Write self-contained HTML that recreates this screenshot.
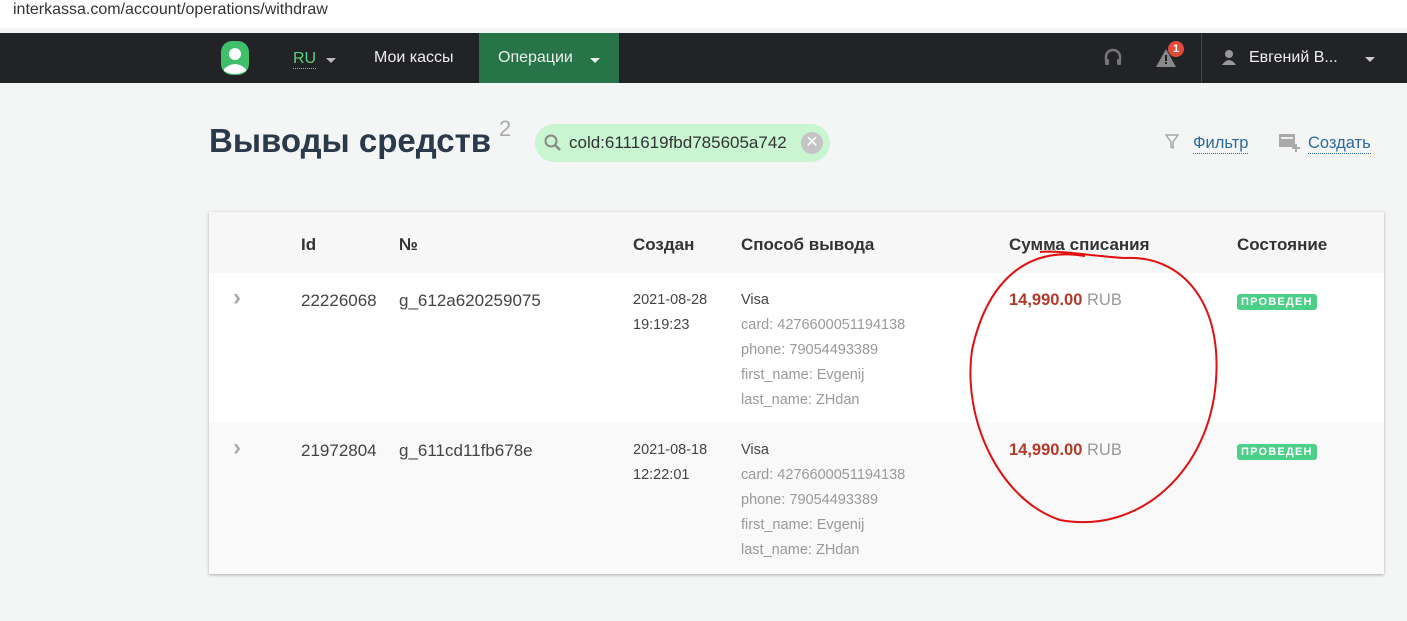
<!DOCTYPE html>
<html><head><meta charset="utf-8"><style>
*{margin:0;padding:0;box-sizing:border-box}
body{width:1407px;height:621px;overflow:hidden;background:#f4f5f5;font-family:"Liberation Sans","DejaVu Sans",sans-serif;position:relative}
.abs{position:absolute;white-space:nowrap}
.addr{position:absolute;left:0;top:0;width:1407px;height:28px;background:#fff;font-size:16px;color:#333;padding:1px 0 0 13px}
.nav{position:absolute;left:0;top:33px;width:1407px;height:50px;background:#222327}
.nav .t{color:#eee;font-size:16px;top:16px}
.car{position:absolute;width:0;height:0;border-left:5px solid transparent;border-right:5px solid transparent;border-top:5px solid #bbb}
.card{position:absolute;left:209px;top:212px;width:1175px;height:362px;background:#f7f7f7;box-shadow:0 1px 3px rgba(0,0,0,.3)}
.row{position:absolute;left:0;width:1175px;height:150px}
.th{font-weight:bold;font-size:17px;color:#333;top:23px}
.td{font-size:17px;color:#444}
.sm{font-size:14.5px;color:#444;line-height:25px}
.gr{color:#999}
.badge{background:#4ccf87;color:#fff;font-size:11px;font-weight:bold;letter-spacing:1.2px;padding:2px 4px;border-radius:3px}
.amt{font-size:16.5px;font-weight:bold;color:#b23a2b}
.amt span{font-weight:normal;color:#999}
.chev{color:#aaa;font-size:24px;font-weight:bold;line-height:24px}
</style></head><body>
<div class="addr">interkassa.com/account/operations/withdraw</div>
<div class="nav">
  <svg class="abs" style="left:220px;top:8px" width="30" height="36" viewBox="0 0 30 36"><rect x="1" y="0" width="28" height="34" rx="11" fill="#3fbf6a"/><circle cx="15" cy="13" r="6" fill="#fff"/><path d="M4 28 Q15 18 26 28 L26 30 Q15 36 4 30Z" fill="#fff"/></svg>
  <div class="abs t" style="left:293px;color:#5fcf82;border-bottom:1px dotted #5fcf82;line-height:18px;top:17px">RU</div>
  <div class="car" style="left:326px;top:25px"></div>
  <div class="abs t" style="left:374px;top:16px">Мои кассы</div>
  <div class="abs" style="left:479px;top:0;width:140px;height:50px;background:#267447"></div>
  <div class="abs t" style="left:498px">Операции</div>
  <div class="car" style="left:590px;top:25px;border-top-color:#eee"></div>
  <svg class="abs" style="left:1102px;top:15px" width="22" height="22" viewBox="0 0 22 22"><path d="M4 12 V9 a7 7 0 0 1 14 0 V12" stroke="#777" stroke-width="2.5" fill="none"/><rect x="3" y="11" width="4" height="6" rx="1" fill="#777"/><rect x="15" y="11" width="4" height="6" rx="1" fill="#777"/></svg>
  <svg class="abs" style="left:1156px;top:15px" width="22" height="20" viewBox="0 0 22 20"><path d="M10 1 L20 19 H0Z" fill="#888"/><rect x="9" y="7" width="2" height="6" fill="#222"/><rect x="9" y="14" width="2" height="2" fill="#222"/></svg>
  <div class="abs" style="left:1168px;top:8px;width:16px;height:16px;border-radius:50%;background:#e24a3b;color:#fff;font-size:11px;font-weight:bold;text-align:center;line-height:16px">1</div>
  <div class="abs" style="left:1201px;top:0;width:1px;height:50px;background:#444"></div>
  <svg class="abs" style="left:1221px;top:16px" width="16" height="16" viewBox="0 0 16 16"><circle cx="8" cy="5" r="4" fill="#999"/><path d="M1 16 Q8 6 15 16Z" fill="#999"/></svg>
  <div class="abs t" style="left:1249px;top:16px">Евгений В...</div>
  <div class="car" style="left:1365px;top:24px;border-top-color:#ccc"></div>
</div>
<div class="abs" style="left:209px;top:122px;font-size:33px;font-weight:bold;color:#2b3a4a">Выводы средств</div>
<div class="abs" style="left:499px;top:116px;font-size:22px;color:#aaa">2</div>
<div class="abs" style="left:535px;top:124px;width:295px;height:38px;border-radius:19px;background:#c9f5d1"></div>
<svg class="abs" style="left:543px;top:133px" width="20" height="20" viewBox="0 0 20 20"><circle cx="8" cy="8" r="5.5" stroke="#888" stroke-width="2" fill="none"/><path d="M12 12 L17 17" stroke="#888" stroke-width="2.5"/></svg>
<div class="abs" style="left:569px;top:133px;font-size:17px;color:#333">cold:6111619fbd785605a742</div>
<div class="abs" style="left:801px;top:132px;width:22px;height:22px;border-radius:50%;background:#c4c4c4;color:#fff;font-size:16px;font-weight:bold;text-align:center;line-height:22px">✕</div>
<svg class="abs" style="left:1165px;top:134px" width="14" height="16" viewBox="0 0 14 16"><path d="M1 1 H13 L8 8 V14 L6 13 V8Z" stroke="#aaa" fill="none" stroke-width="1.5"/></svg>
<div class="abs" style="left:1193px;top:134px;font-size:16.5px;color:#2b6aa0;border-bottom:1px dotted #2b6aa0;line-height:19px">Фильтр</div>
<svg class="abs" style="left:1279px;top:134px" width="22" height="18" viewBox="0 0 22 18"><rect x="0" y="0" width="16" height="13" fill="#aaa"/><rect x="2" y="3" width="12" height="2" fill="#eee"/><path d="M17 10 V18 M13 14 H21" stroke="#aaa" stroke-width="2"/></svg>
<div class="abs" style="left:1308px;top:134px;font-size:16.5px;color:#2b6aa0;border-bottom:1px dotted #2b6aa0;line-height:19px">Создать</div>

<div class="card">
  <div class="abs th" style="left:92px">Id</div>
  <div class="abs th" style="left:190px">№</div>
  <div class="abs th" style="left:424px">Создан</div>
  <div class="abs th" style="left:532px">Способ вывода</div>
  <div class="abs th" style="left:800px">Сумма списания</div>
  <div class="abs th" style="left:1028px">Состояние</div>
  <div class="row" style="top:61px;background:#fff">
    <div class="abs chev" style="left:24px;top:13px">›</div>
    <div class="abs td" style="left:92px;top:18px">22226068</div>
    <div class="abs td" style="left:190px;top:18px">g_612a620259075</div>
    <div class="abs sm" style="left:424px;top:15px">2021-08-28<br>19:19:23</div>
    <div class="abs sm" style="left:532px;top:15px">Visa<br><span class="gr">card: 4276600051194138<br>phone: 79054493389<br>first_name: Evgenij<br>last_name: ZHdan</span></div>
    <div class="abs amt" style="left:800px;top:18px">14,990.00 <span>RUB</span></div>
    <div class="abs" style="left:1028px;top:19px"><span class="badge">ПРОВЕДЕН</span></div>
  </div>
  <div class="row" style="top:211px;background:#f9f9f9">
    <div class="abs chev" style="left:24px;top:13px">›</div>
    <div class="abs td" style="left:92px;top:18px">21972804</div>
    <div class="abs td" style="left:190px;top:18px">g_611cd11fb678e</div>
    <div class="abs sm" style="left:424px;top:15px">2021-08-18<br>12:22:01</div>
    <div class="abs sm" style="left:532px;top:15px">Visa<br><span class="gr">card: 4276600051194138<br>phone: 79054493389<br>first_name: Evgenij<br>last_name: ZHdan</span></div>
    <div class="abs amt" style="left:800px;top:18px">14,990.00 <span>RUB</span></div>
    <div class="abs" style="left:1028px;top:19px"><span class="badge">ПРОВЕДЕН</span></div>
  </div>
</div>
<svg class="abs" style="left:0;top:0" width="1407" height="621"><path d="M1085 256 C1020 245 985 290 972 350 C962 420 1000 500 1060 520 C1140 535 1210 470 1216 380 C1222 300 1180 255 1125 258 C1100 257 1060 250 1040 252" stroke="#e01010" stroke-width="2" fill="none"/></svg>
</body></html>
